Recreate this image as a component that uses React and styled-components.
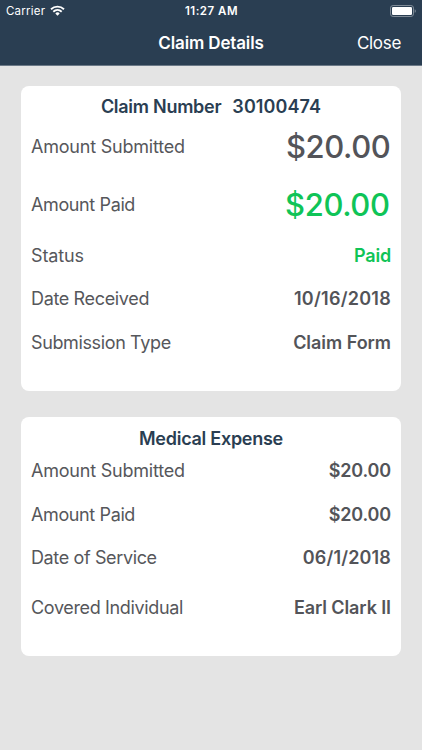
import React from "react";
import styled, { createGlobalStyle } from "styled-components";

const Global = createGlobalStyle`
  * { box-sizing: border-box; }
  body { margin: 0; background: #e4e4e4; font-family: Inter, "Liberation Sans", sans-serif; }
`;

const Screen = styled.div`
  display: flex;
  flex-direction: column;
  height: 750px;
  background: #e4e4e4;
`;

const Header = styled.header`
  height: 66px;
  border-bottom: 1px solid #6b7987;
  background: #2a3e52;
  color: #fff;
`;

const Bar = styled.div`
  display: grid;
  grid-template-columns: 1fr auto 1fr;
  align-items: center;
  height: ${(p) => p.$height}px;
  padding: ${(p) => p.$padding};
`;

const StatusText = styled.span`
  display: inline-block;
  white-space: nowrap;
  font-size: 11.5px;
  line-height: 14px;
  font-weight: ${(p) => p.$weight || 400};
  letter-spacing: ${(p) => p.$spacing || 0}px;
`;

const Carrier = styled.div`
  display: flex;
  align-items: center;
  gap: 5px;
`;

const BatterySlot = styled.div`
  display: flex;
  justify-content: flex-end;
`;

const Title = styled.h1`
  grid-column: 2;
  margin: 0;
  font-size: 17px;
  line-height: 22px;
  font-weight: 600;
  letter-spacing: -0.14px;
`;

const CloseButton = styled.button`
  justify-self: end;
  padding: 0;
  border: 0;
  background: none;
  color: #fff;
  font: 400 17px/22px Inter, sans-serif;
  letter-spacing: -0.3px;
`;

const Content = styled.main`
  display: flex;
  flex-direction: column;
  gap: 26px;
  padding: 20px 21px;
`;

const Card = styled.section`
  height: ${(p) => p.$height}px;
  padding: ${(p) => p.$top}px 10px 0;
  border-radius: 8px;
  background: #fff;
`;

const CardTitle = styled.h2`
  display: flex;
  justify-content: center;
  gap: 11px;
  margin: 0;
  height: 21px;
  white-space: nowrap;
  color: #2a3e52;
  font-size: 18px;
  line-height: 22px;
  font-weight: 600;
  letter-spacing: -0.27px;
`;

const ClaimNumber = styled.span`
  letter-spacing: 0.1px;
`;

const Row = styled.div`
  display: flex;
  align-items: center;
  justify-content: space-between;
  height: ${(p) => p.$height}px;
`;

const Label = styled.span`
  color: #56575b;
  font-size: 18px;
  letter-spacing: ${(p) => p.$spacing}px;
`;

const Value = styled.span`
  color: ${(p) => (p.$paid ? "#0fc457" : "#535459")};
  font-size: ${(p) => (p.$large ? 31 : 18)}px;
  font-weight: ${(p) => (p.$large ? 550 : 580)};
  letter-spacing: ${(p) => p.$spacing}px;
  margin-right: ${(p) => p.$inset || 0}px;
`;

const claimRows = [
  { label: "Amount Submitted", value: "$20.00", height: 58, large: true, ls: -0.22, vs: -0.42, inset: 0.6 },
  { label: "Amount Paid", value: "$20.00", height: 58, large: true, paid: true, ls: -0.38, vs: -0.42, inset: 1.5 },
  { label: "Status", value: "Paid", height: 44, paid: true, ls: -0.15, vs: -0.2 },
  { label: "Date Received", value: "10/16/2018", height: 43, ls: -0.35, vs: 0.26 },
  { label: "Submission Type", value: "Claim Form", height: 44, ls: -0.37, vs: -0.04 },
];

const expenseRows = [
  { label: "Amount Submitted", value: "$20.00", height: 43, ls: -0.22, vs: -0.16 },
  { label: "Amount Paid", value: "$20.00", height: 44, ls: -0.38, vs: -0.16 },
  { label: "Date of Service", value: "06/1/2018", height: 43, ls: -0.37, vs: 0.16 },
  { label: "Covered Individual", value: "Earl Clark II", height: 56, ls: -0.35, vs: -0.1 },
];

const Rows = ({ items }) =>
  items.map((r) => (
    <Row key={r.label} $height={r.height}>
      <Label $spacing={r.ls}>{r.label}</Label>
      <Value $large={r.large} $paid={r.paid} $spacing={r.vs} $inset={r.inset}>
        {r.value}
      </Value>
    </Row>
  ));

export default function App() {
  return (
    <Screen>
      <Global />
      <Header>
        <Bar $height={21} $padding="0 5px 0 6px">
          <Carrier>
            <StatusText $spacing={0.22}>Carrier</StatusText>
            <svg width="15" height="11" viewBox="0 0 15 11" fill="none" stroke="#fff" strokeWidth="1.9">
              <path d="M1 4.2a9.5 9.5 0 0 1 13 0M3.3 6.7a6.2 6.2 0 0 1 8.4 0" />
              <path d="M5.3 8.4a3.2 3.2 0 0 1 4.4 0L7.5 10.7z" fill="#fff" stroke="none" />
            </svg>
          </Carrier>
          <StatusText $weight={580} $spacing={0.52}>11:27 AM</StatusText>
          <BatterySlot>
            <svg width="27" height="12" viewBox="0 0 27 12">
              <rect x=".5" y=".5" width="23" height="11" rx="2.6" fill="none" stroke="#7f8b97" />
              <rect x="2" y="2" width="20" height="8" rx="1.2" fill="#fff" />
              <path d="M24.7 4.2c1.5.5 1.5 3.1 0 3.6z" fill="#7f8b97" />
            </svg>
          </BatterySlot>
        </Bar>
        <Bar $height={44} $padding="0 21px">
          <Title>Claim Details</Title>
          <CloseButton>Close</CloseButton>
        </Bar>
      </Header>
      <Content>
        <Card $height={305} $top={10}>
          <CardTitle>
            <span>Claim Number</span>
            <ClaimNumber>30100474</ClaimNumber>
          </CardTitle>
          <Rows items={claimRows} />
        </Card>
        <Card $height={239} $top={11}>
          <CardTitle>Medical Expense</CardTitle>
          <Rows items={expenseRows} />
        </Card>
      </Content>
    </Screen>
  );
}
